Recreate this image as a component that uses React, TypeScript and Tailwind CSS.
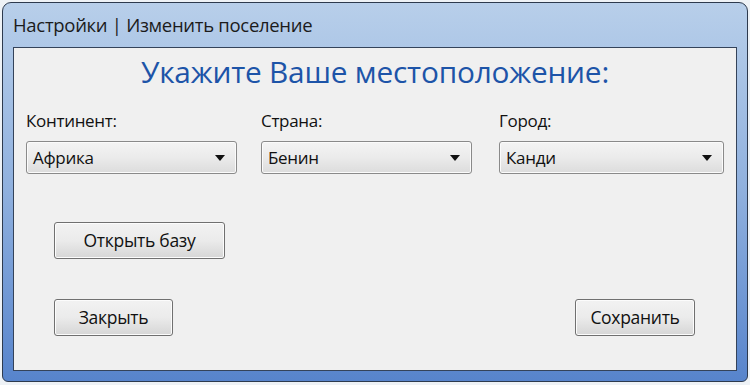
import React from 'react';

const font = { fontFamily: '"Open Sans", "Noto Sans", sans-serif' };

function Combo({ value, width }: { value: string; width: string }) {
  return (
    <div
      className={`${width} h-[33px] flex items-center justify-between pl-[6px] pr-[11px] rounded-[3px] border border-[#8a8a8a] bg-gradient-to-b from-[#f4f4f4] via-[#ebebeb] to-[#dcdcdc] shadow-[inset_0_0_0_1px_#fbfbfb]`}
    >
      <span className="text-[17px] text-[#111] tracking-[-0.3px]">{value}</span>
      <svg width="10" height="6" viewBox="0 0 10 6">
        <path d="M0 0 H10 L5 6 Z" fill="#111" />
      </svg>
    </div>
  );
}

function Button({ label, width, height }: { label: string; width: string; height: string }) {
  return (
    <button
      className={`${width} ${height} flex items-center justify-center rounded-[3px] border border-[#707070] bg-gradient-to-b from-[#f2f2f2] via-[#ebebeb] to-[#d6d6d6] shadow-[inset_0_0_0_1px_#fcfcfc] text-[17.5px] text-[#111] tracking-[-0.3px]`}
    >
      {label}
    </button>
  );
}

export default function App() {
  return (
    <div className="w-[750px] h-[385px] bg-[#eef2f6] p-[2px] pb-[3px]" style={font}>
      <div className="h-full rounded-t-[9px] rounded-b-[6px] border border-[#2d3a4e] bg-gradient-to-b from-[#b8cfea] via-[#8fb0de] to-[#5784cc] flex flex-col px-[10px] pb-[10px]">
        {/* Title bar */}
        <div className="h-[44px] flex items-center shrink-0">
          <span className="text-[18.5px] text-[#1b1b1b] tracking-[-0.3px]">Настройки | Изменить поселение</span>
        </div>

        {/* Client area */}
        <div className="flex-1 border border-[#34435a] bg-[#f0f0f0] flex flex-col">
          <div className="text-center text-[29.8px] text-[#1d54a8] mt-[5px] leading-[37px] tracking-[-0.2px]">
            Укажите Ваше местоположение:
          </div>

          <div className="flex mt-[20px] pl-[12px]">
            <div className="flex flex-col w-[235px]">
              <span className="text-[17px] text-[#111] leading-[22px] tracking-[-0.3px]">Континент:</span>
              <div className="mt-[9px]">
                <Combo value="Африка" width="w-[211px]" />
              </div>
            </div>
            <div className="flex flex-col w-[238px]">
              <span className="text-[17px] text-[#111] leading-[22px] tracking-[-0.3px]">Страна:</span>
              <div className="mt-[9px]">
                <Combo value="Бенин" width="w-[211px]" />
              </div>
            </div>
            <div className="flex flex-col">
              <span className="text-[17px] text-[#111] leading-[22px] tracking-[-0.3px]">Город:</span>
              <div className="mt-[9px]">
                <Combo value="Канди" width="w-[225px]" />
              </div>
            </div>
          </div>

          <div className="pl-[40px] mt-[48px]">
            <Button label="Открыть базу" width="w-[171px]" height="h-[37px]" />
          </div>

          <div className="flex justify-between pl-[40px] pr-[41px] mt-[40px]">
            <Button label="Закрыть" width="w-[119px]" height="h-[37px]" />
            <Button label="Сохранить" width="w-[120px]" height="h-[37px]" />
          </div>
        </div>
      </div>
    </div>
  );
}
